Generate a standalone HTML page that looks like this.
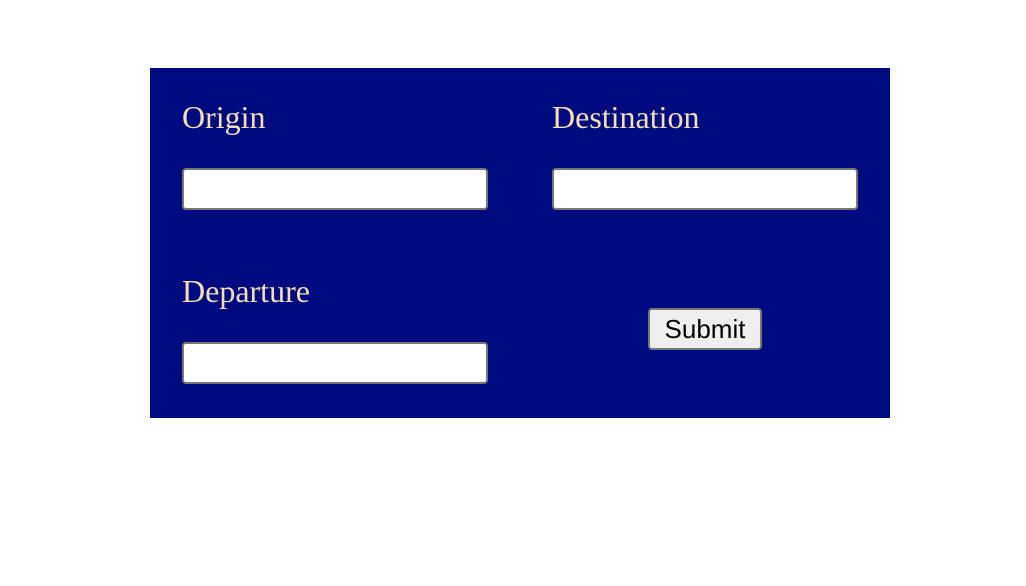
<!DOCTYPE html>
<html><head><style>
body{margin:0;background:#fff;width:1026px;height:586px;position:relative;overflow:hidden}
.p{position:absolute;left:150px;top:68px;width:740px;height:350px;background:#000a80}
.l{position:absolute;font-family:"Liberation Serif",serif;font-size:32px;color:#f5deb3;line-height:1}
.i{position:absolute;width:302px;height:38px;background:#fff;border:2px solid #777;border-radius:4px;box-sizing:content-box}
.b{position:absolute;left:648px;top:308px;width:110px;height:38px;background:#efefef;border:2px solid #777;border-radius:4px;font-family:"Liberation Sans",sans-serif;font-size:26px;color:#000;text-align:center;line-height:38px}
</style></head><body>
<div class="p"></div>
<div class="l" style="left:182px;top:101px">Origin</div>
<div class="l" style="left:552px;top:101px">Destination</div>
<div class="l" style="left:182px;top:275px">Departure</div>
<div class="i" style="left:182px;top:168px"></div>
<div class="i" style="left:552px;top:168px"></div>
<div class="i" style="left:182px;top:342px"></div>
<div class="b">Submit</div>
</body></html>
